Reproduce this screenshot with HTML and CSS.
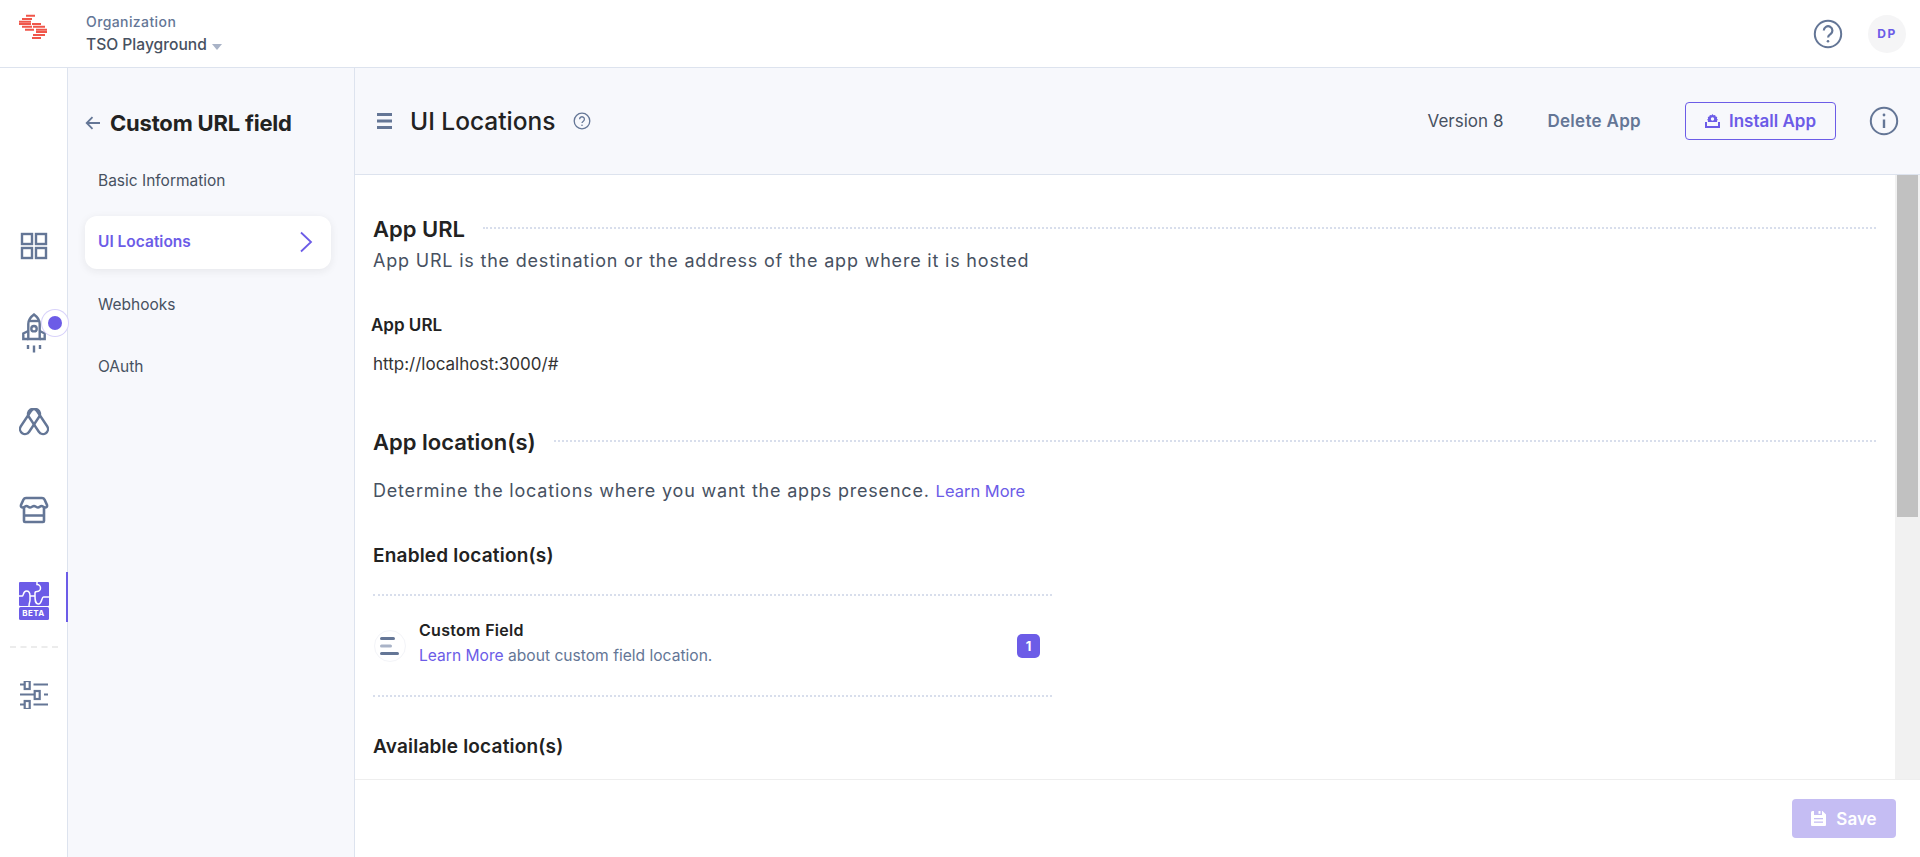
FILE: index.html
```html
<!DOCTYPE html>
<html lang="en">
<head>
  <meta charset="UTF-8" />
  <meta name="viewport" content="width=device-width, initial-scale=1.0" />
  <title>UI Locations</title>
  <link rel="stylesheet" href="styles.css">
</head>
<body>

  <!-- Top bar -->
  <header class="topbar">
    <div class="logo">
      <svg width="30" height="26" viewBox="0 0 30 26" fill="none" stroke="#f0564a" stroke-width="2">
        <path d="M8 1.700h9M4 5h10M1 7.700h12M1 10h12M14 10h9M4 12.700h10M15 12.700h12M7 15.700h9M18 15.700h11M18 18h11M15 21h12M14 24h9"/>
      </svg>
    </div>
    <div class="org">
      <div class="org-label">Organization</div>
      <div class="org-name">TSO Playground <span class="caret"></span></div>
    </div>
    <div class="top-right">
      <svg class="help-icon" width="30" height="30" viewBox="0 0 30 30" fill="none" stroke="#647696" stroke-width="2">
        <circle cx="15" cy="15" r="13.200"/>
        <path d="M10.800 11.600a4.300 4.300 0 1 1 6.600 3.600c-1.500 1-2.300 1.800-2.300 3.300" stroke-width="2.200"/>
        <circle cx="15" cy="22.200" r="1.300" fill="#647696" stroke="none"/>
      </svg>
      <div class="avatar">DP</div>
    </div>
  </header>

  <div class="shell">

    <!-- Icon rail -->
    <nav class="rail">
      <a class="rail-item rail-grid">
        <svg width="28" height="28" viewBox="0 0 28 28" fill="none" stroke="#647696" stroke-width="2.400">
          <rect x="2" y="2" width="10" height="10"/><rect x="16" y="2" width="10" height="10"/>
          <rect x="2" y="16" width="10" height="10"/><rect x="16" y="16" width="10" height="10"/>
        </svg>
      </a>
      <a class="rail-item rail-rocket">
        <svg width="26" height="40" viewBox="0 0 26 40" fill="none" stroke="#647696" stroke-width="2.400">
          <path d="M13 1.500C9.500 4 7.300 7.500 7.300 11v15h11.400V11c0-3.500-2.200-7-5.700-9.500z"/>
          <path d="M8 8h10"/>
          <circle cx="13" cy="15.700" r="2.700"/>
          <path d="M7.300 18 2.300 20.500V26h5M18.700 18l5 2.500V26h-5"/>
          <path d="M7 32v4M13 32.500v7M19 32v4"/>
        </svg>
        <span class="rocket-dot"></span>
      </a>
      <a class="rail-item rail-ads">
        <svg width="30" height="28" viewBox="0 0 30 28" fill="none" stroke="#647696" stroke-width="2.400">
          <rect x="6" y="-.5" width="10" height="28" rx="5" transform="rotate(33.700 11 13.500)"/>
          <rect x="14" y="-.5" width="10" height="28" rx="5" transform="rotate(-33.700 19 13.500)"/>
        </svg>
      </a>
      <a class="rail-item rail-store">
        <svg width="30" height="28" viewBox="0 0 30 28" fill="none" stroke="#647696" stroke-width="2.600" stroke-linejoin="round">
          <path d="M7 2h16c1.500 0 2 .5 2.500 1.500L28 9c.5 1.500-.5 2.500-2 2.500-1.500 0-2-1.500-3.500-1.500S20.500 11.500 19 11.500 16.500 10 15 10s-2.500 1.500-4 1.500S9 10 7.500 10 5.500 11.500 4 11.500c-1.500 0-2.500-1-2-2.500l2.500-5.500C5 2.500 5.500 2 7 2z"/>
          <path d="M5 12v13a1 1 0 0 0 1 1h18a1 1 0 0 0 1-1V12M5 19.500h20"/>
        </svg>
      </a>
      <a class="rail-item rail-apps">
        <svg width="30" height="38" viewBox="0 0 30 38" fill="none">
          <rect width="30" height="24" rx="1" fill="#6c5ce7"/>
          <path d="M18 0v2.500a3.500 3.500 0 0 1 0 7c-1.500 0-2 .5-2 1.500v3M0 14h3.500c1 0 .5-5 4-5s3.500 3 3.500 5v4c0 2-1 3-1 6M11 14h5M16 14c0 4 0 8 3.500 8s3-7 5-7H30" stroke="#fff" stroke-width="1.500"/>
          <rect y="25" width="30" height="13" rx="1.500" fill="#6c5ce7"/>
        </svg>
        <span class="beta">BETA</span>
      </a>
      <div class="rail-sep"></div>
      <a class="rail-item rail-sliders">
        <svg width="30" height="28" viewBox="0 0 30 28" fill="none" stroke="#647696" stroke-width="2.200">
          <path d="M1 3.500h4M14.500 3.500H29M1 13.500h14M25 13.500h4M1 23.500h4M14.500 23.500H29"/>
          <rect x="5.700" y="0" width="5" height="8"/>
          <rect x="15.700" y="10" width="5" height="8"/>
          <rect x="5.700" y="20" width="5" height="8"/>
        </svg>
      </a>
    </nav>

    <!-- App sidebar -->
    <aside class="side">
      <div class="side-title">
        <svg width="16" height="14" viewBox="0 0 16 14" fill="none" stroke="#647696" stroke-width="1.800">
          <path d="M15 7H2M7.500 1.200 1.700 7l5.800 5.800"/>
        </svg>
        <span>Custom URL field</span>
      </div>
      <ul class="side-menu">
        <li class="side-link">Basic Information</li>
        <li class="side-link active">
          UI Locations
          <svg width="14" height="22" viewBox="0 0 14 22" fill="none" stroke="#6c5ce7" stroke-width="1.800">
            <path d="M2 1.500 12 11 2 20.500"/>
          </svg>
        </li>
        <li class="side-link">Webhooks</li>
        <li class="side-link">OAuth</li>
      </ul>
    </aside>

    <main class="main">
      <div class="page-head">
        <svg width="15" height="16" viewBox="0 0 15 16" fill="#647696">
          <rect width="15" height="3"/><rect y="6.500" width="15" height="3"/><rect y="13" width="15" height="3"/>
        </svg>
        <h1>UI Locations</h1>
        <svg width="18" height="18" viewBox="0 0 18 18" fill="none" stroke="#647696" stroke-width="1.300">
          <circle cx="9" cy="9" r="7.800"/>
          <path d="M6.600 7.200a2.400 2.400 0 1 1 3.700 2c-.9.600-1.300 1-1.300 1.900"/>
          <circle cx="9" cy="13.200" r=".8" fill="#647696" stroke="none"/>
        </svg>
        <div class="head-actions">
          <span class="version">Version 8</span>
          <span class="delete">Delete App</span>
          <button class="install">
            <svg width="15" height="14" viewBox="0 0 15 14" fill="#6c5ce7">
              <path d="M7.500 0l1 1.300 1.600-.3.600 1.500 1.500.6-.3 1.600 1 1-1 1.100.3 1.200H2.800l.3-1.200-1-1.100 1-1-.3-1.600 1.500-.6.600-1.500 1.600.3z"/>
              <circle cx="7.500" cy="5" r="1.700" fill="#f7f8fc"/>
              <path d="M0 8h2v4h11V8h2v6H0z"/>
            </svg>
            Install App
          </button>
          <svg width="30" height="30" viewBox="0 0 30 30" fill="none" stroke="#647696" stroke-width="2">
            <circle cx="15" cy="15" r="13.200"/>
            <path d="M15 13.500v8.500" stroke-width="2.400"/>
            <circle cx="15" cy="9" r="1.400" fill="#647696" stroke="none"/>
          </svg>
        </div>
      </div>

      <div class="body-row">
        <div class="content">
          <div class="section-head"><h2>App URL</h2><span class="dots"></span></div>
          <p class="lead">App URL is the destination or the address of the app where it is hosted</p>
          <div class="field-label">App URL</div>
          <div class="field-value">http://localhost:3000/#</div>

          <div class="section-head second"><h2>App location(s)</h2><span class="dots"></span></div>
          <p class="lead lead-two">Determine the locations where you want the apps presence. <a class="learn">Learn More</a></p>

          <h3>Enabled location(s)</h3>
          <div class="loc-card">
            <span class="loc-icon">
              <svg width="20" height="20" viewBox="0 0 20 20">
                <rect y="1" width="15" height="3" rx="1.500" fill="#647696"/>
                <rect y="8.500" width="12" height="3" rx="1.500" fill="#a9b3c7"/>
                <rect y="16" width="19" height="3" rx="1.500" fill="#647696"/>
              </svg>
            </span>
            <div class="loc-text">
              <div class="loc-name">Custom Field</div>
              <div class="loc-desc"><a class="learn">Learn More</a> about custom field location.</div>
            </div>
            <span class="badge">1</span>
          </div>
          <h3 class="available">Available location(s)</h3>
        </div>
        <div class="scrollbar"><div class="thumb"></div></div>
      </div>

      <footer class="footer">
        <button class="save">
          <svg width="15" height="15" viewBox="0 0 15 15">
            <path d="M1.500 0H3v4h8V0h.500L15 3.500V14a1 1 0 0 1-1 1H1a1 1 0 0 1-1-1V1.500A1.500 1.500 0 0 1 1.500 0z" fill="#fff"/>
            <rect x="3" y="7" width="9" height="1.300" fill="#c5bdf3"/>
            <rect x="3" y="10.500" width="9" height="1.300" fill="#c5bdf3"/>
            <rect x="7.500" y="0" width="2" height="2.800" fill="#fff"/>
          </svg>
          Save
        </button>
      </footer>
    </main>
  </div>

</body>
</html>
```

FILE: styles.css
```css
* {
  box-sizing: border-box;
}

html, body {
  height: 100%;
}

body {
  margin: 0;
  overflow: hidden;
  background: #fff;
  color: #222;
  font-family: 'Inter', 'Noto Sans', sans-serif;
  display: flex;
  flex-direction: column;
}

/* top bar */
.topbar {
  height: 68px;
  flex: none;
  display: flex;
  align-items: center;
  border-bottom: 1px solid #dde3ee;
}

.logo {
  width: 67px;
  padding: 0 0 13px 18px;
  line-height: 0;
}

.org {
  padding: 1px 0 0 19px;
}

.org-label {
  font-size: 14px;
  line-height: 18px;
  font-weight: 500;
  letter-spacing: .4px;
  color: #647696;
}

.org-name {
  margin-top: 4px;
  font-size: 15.600px;
  line-height: 20px;
  font-weight: 500;
  color: #475161;
}

.caret {
  display: inline-block;
  margin-left: 1px;
  vertical-align: 0;
  border-left: 5px solid transparent;
  border-right: 5px solid transparent;
  border-top: 6px solid #a9b3c7;
}

.top-right {
  margin-left: auto;
  padding-right: 14px;
  display: flex;
  align-items: center;
  gap: 25px;
}

.avatar {
  width: 38px;
  height: 38px;
  border-radius: 50%;
  background: #f5f5f6;
  color: #6c5ce7;
  font-size: 12px;
  font-weight: 700;
  letter-spacing: 1.500px;
  display: flex;
  align-items: center;
  justify-content: center;
}

.shell {
  flex: 1;
  display: flex;
  min-height: 0;
}

/* icon rail */
.rail {
  width: 67px;
  flex: none;
  display: flex;
  flex-direction: column;
  align-items: center;
  padding-top: 164px;
}

.rail-item {
  position: relative;
  display: flex;
  justify-content: center;
  line-height: 0;
}

.rail-grid {
  margin-bottom: 53px;
}

.rail-rocket {
  margin-bottom: 55px;
}

.rail-ads {
  margin-bottom: 60px;
}

.rail-store {
  margin-bottom: 48px;
}

.rail-apps {
  width: 67px;
  height: 50px;
  padding-top: 10px;
}

.rail-apps::after {
  content: "";
  position: absolute;
  top: 0;
  bottom: 0;
  right: -1px;
  width: 2px;
  background: #6c5ce7;
}

.rocket-dot {
  position: absolute;
  top: 3px;
  left: 27px;
  width: 14px;
  height: 14px;
  border-radius: 50%;
  background: #6c5ce7;
  box-shadow: 0 0 0 6px #fff, 0 0 0 7px #d8d2fa;
}

.beta {
  position: absolute;
  left: 0;
  right: 0;
  top: 35px;
  text-align: center;
  color: #fff;
  font-size: 8px;
  line-height: 13px;
  font-weight: 700;
  letter-spacing: .4px;
}

.rail-sep {
  width: 48px;
  margin: 24px 0 33px;
  border-top: 2px dashed #ececec;
}

/* app sidebar */
.side {
  width: 288px;
  flex: none;
  background: #f7f8fc;
  border-left: 1px solid #dde3ee;
  border-right: 1px solid #dde3ee;
  padding: 0 23px 0 17px;
}

.side-title {
  display: flex;
  align-items: center;
  gap: 9px;
  height: 30px;
  margin: 40px 0 16px;
  font-size: 22px;
  font-weight: 700;
  letter-spacing: -.2px;
  color: #222;
}

.side-menu {
  list-style: none;
  margin: 0;
  padding: 0;
}

.side-link {
  height: 53px;
  margin-bottom: 9.400px;
  padding: 0 18px 0 13px;
  display: flex;
  align-items: center;
  justify-content: space-between;
  font-size: 15.500px;
  color: #475161;
}

.side-link.active {
  margin-top: 1px;
  margin-bottom: 8.400px;
  padding-bottom: 2px;
  background: #fff;
  border-radius: 12px;
  color: #6c5ce7;
  font-weight: 600;
  box-shadow: 0 2px 8px rgba(34, 34, 34, .08);
}

/* main */
.main {
  flex: 1;
  min-width: 0;
  display: flex;
  flex-direction: column;
}

.page-head {
  height: 107px;
  flex: none;
  background: #f7f8fc;
  border-bottom: 1px solid #dde3ee;
  display: flex;
  align-items: center;
  padding: 0 21px 0 22px;
}

h1 {
  margin: 0 17px 0 18px;
  font-size: 24.500px;
  line-height: 30px;
  font-weight: 500;
  color: #222;
}

.head-actions {
  margin-left: auto;
  display: flex;
  align-items: center;
}

.version {
  font-size: 17px;
  color: #475161;
  margin-right: 44px;
}

.delete {
  font-size: 17px;
  font-weight: 600;
  letter-spacing: .3px;
  color: #647696;
  margin-right: 44px;
}

.install {
  width: 151px;
  height: 38px;
  margin-right: 33px;
  background: transparent;
  border: 1px solid #6c5ce7;
  border-radius: 4px;
  color: #6c5ce7;
  font-family: inherit;
  font-size: 17px;
  font-weight: 600;
  display: flex;
  align-items: center;
  justify-content: center;
  gap: 9px;
}

.body-row {
  flex: 1;
  min-height: 0;
  display: flex;
  overflow: hidden;
}

.content {
  flex: 1;
  min-width: 0;
  padding: 39px 19px 0 18px;
}

.section-head {
  display: flex;
  align-items: center;
  gap: 18px;
  height: 30px;
}

.section-head h2 {
  margin: 0;
  font-size: 22px;
  font-weight: 600;
  color: #222;
}

.dots {
  flex: 1;
  border-top: 2px dotted #d8deec;
  margin-top: -3px;
}

.lead {
  margin: 5px 0 0;
  font-size: 18px;
  line-height: 24px;
  letter-spacing: .8px;
  color: #475161;
}

.field-label {
  margin: 41px 0 0 -2px;
  font-size: 17px;
  line-height: 22px;
  font-weight: 600;
  color: #222;
}

.field-value {
  margin-top: 17px;
  font-size: 17px;
  line-height: 22px;
  color: #333;
}

.section-head.second {
  margin-top: 52px;
}

.lead-two {
  margin-top: 22px;
}

.learn {
  color: #6c5ce7;
  font-size: 16.500px;
  letter-spacing: 0;
}

h3 {
  margin: 41px 0 0;
  font-size: 19px;
  line-height: 24px;
  font-weight: 600;
  letter-spacing: .2px;
  color: #222;
}

.loc-card {
  width: 679px;
  height: 103px;
  margin-top: 26px;
  border-top: 2px dotted #d8deec;
  border-bottom: 2px dotted #d8deec;
  display: flex;
  align-items: center;
  padding: 0 12px 0 1px;
}

.loc-icon {
  width: 32px;
  height: 32px;
  flex: none;
  border-radius: 50%;
  border: 1px solid #f3f4f8;
  display: flex;
  align-items: center;
  justify-content: center;
  margin: 0 13px 0 0;
}

.loc-text {
  flex: 1;
  padding-bottom: 5px;
}

.loc-name {
  font-size: 16px;
  line-height: 20px;
  font-weight: 600;
  letter-spacing: .3px;
  color: #222;
}

.loc-desc {
  margin-top: 6px;
  font-size: 15.600px;
  line-height: 20px;
  color: #647696;
}

.loc-desc .learn {
  font-size: 15.600px;
}

.badge {
  width: 23px;
  height: 24px;
  border-radius: 5px;
  background: #6c5ce7;
  color: #fff;
  font-size: 13px;
  font-weight: 700;
  display: flex;
  align-items: center;
  justify-content: center;
}

h3.available {
  margin-top: 38px;
}

.scrollbar {
  width: 25px;
  flex: none;
  background: #f1f1f1;
  padding: 0 2px;
}

.thumb {
  height: 342px;
  background: #c1c1c1;
}

.footer {
  height: 78px;
  flex: none;
  border-top: 1px solid #eee;
  display: flex;
  justify-content: flex-end;
  align-items: flex-start;
  padding: 19px 24px 0 0;
}

.save {
  width: 104px;
  height: 39px;
  background: #c5bdf3;
  border: none;
  border-radius: 4px;
  color: #fff;
  font-family: inherit;
  font-size: 17px;
  font-weight: 600;
  display: flex;
  align-items: center;
  justify-content: center;
  gap: 10px;
}
```
